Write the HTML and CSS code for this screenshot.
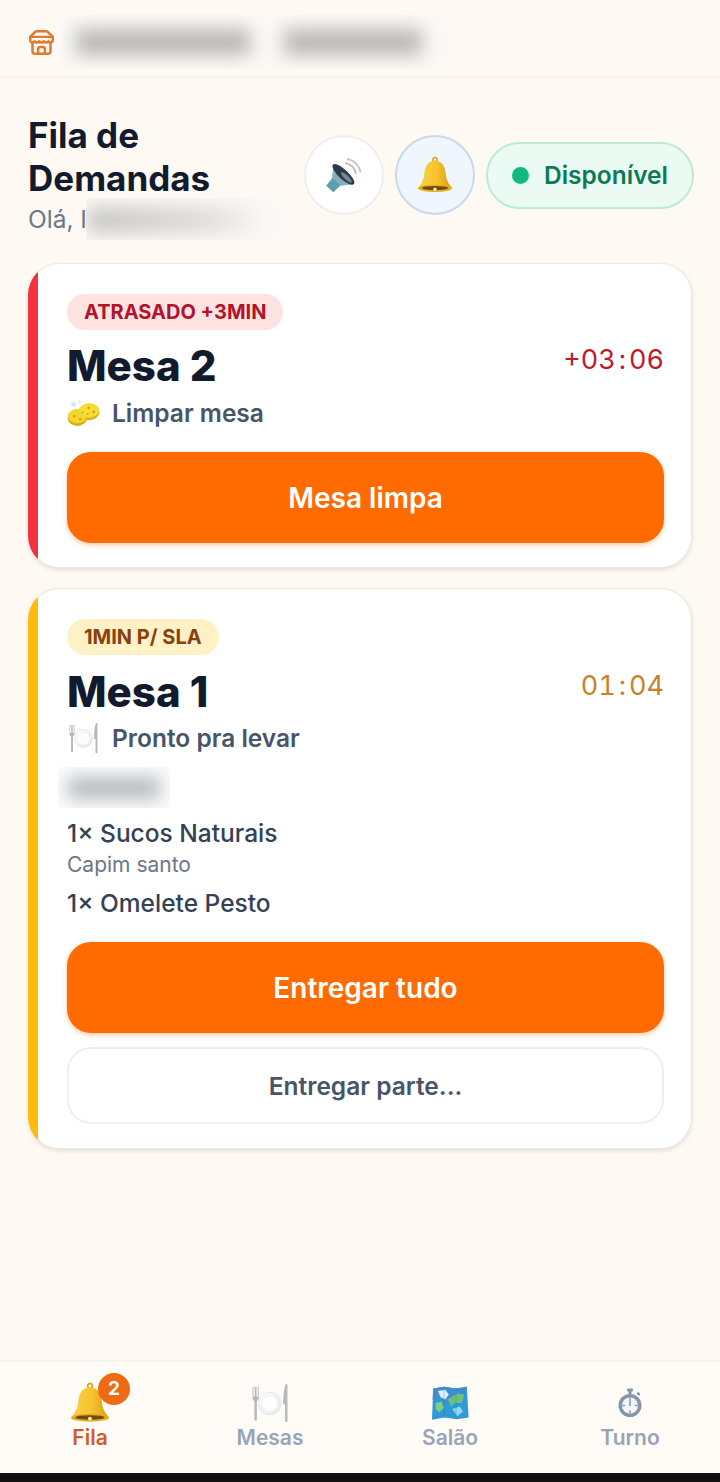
FILE: index.html
```html
<!DOCTYPE html>
<html lang="pt-BR">
<head>
	<meta charset="utf-8">
	<title>Fila de Demandas</title>
	<link rel="stylesheet" href="styles.css">
</head>
<body>
	<!-- icones reaproveitados -->
	<svg class="defs" aria-hidden="true">
		<defs>
			<linearGradient id="ouro" x1="0" y1="0" x2="1" y2="0">
				<stop offset="0" stop-color="#f9d34a"/>
				<stop offset=".55" stop-color="#f6c32c"/>
				<stop offset="1" stop-color="#dd9a12"/>
			</linearGradient>
			<linearGradient id="prato" x1="0" y1="0" x2="1" y2="1">
				<stop offset="0" stop-color="#ffffff"/>
				<stop offset="1" stop-color="#e3e6e9"/>
			</linearGradient>
			<symbol id="ic-sino" viewBox="0 0 64 64">
				<circle cx="32" cy="6" r="3.500" fill="none" stroke="#d9a21c" stroke-width="2.500"/>
				<path d="M32 8C20 8 15 18 14 30C13 41 9 47 3 54L61 54C55 47 51 41 50 30C49 18 44 8 32 8Z" fill="url(#ouro)"/>
				<ellipse cx="32" cy="54.500" rx="29" ry="6" fill="#e8ab1d"/>
				<ellipse cx="32" cy="54" rx="22" ry="3.500" fill="#6d4c12"/>
				<circle cx="32" cy="56" r="3" fill="#ffe9a6"/>
			</symbol>
			<symbol id="ic-prato" viewBox="0 0 64 64">
				<path d="M4 6V24C4 27 6 28 7 29V60H11V29C12 28 14 27 14 24V6H12.500V22H10.500V6H7.500V22H5.500V6Z" fill="#b6babd"/>
				<circle cx="32" cy="33" r="18" fill="url(#prato)" stroke="#e2e5e8" stroke-width="1.500"/>
				<circle cx="32" cy="33" r="12.500" fill="#fcfdfd" stroke="#edeff1"/>
				<path d="M57 2C54 10 53 22 53 34H56V62H60V2Z" fill="#b6babd"/>
			</symbol>
		</defs>
	</svg>

	<div class="app">
		<header class="topo">
			<svg class="topo-loja" viewBox="0 0 24 24" fill="none" stroke="#e07a2c" stroke-width="2.200" stroke-linecap="round" stroke-linejoin="round">
				<path d="m2 7 4.410-4.410A2 2 0 0 1 7.830 2h8.340a2 2 0 0 1 1.420.590L22 7"/>
				<path d="M4 12v8a2 2 0 0 0 2 2h12a2 2 0 0 0 2-2v-8"/>
				<path d="M15 22v-4a2 2 0 0 0-2-2h-2a2 2 0 0 0-2 2v4"/>
				<path d="M2 7h20"/>
				<path d="M22 7v3a2 2 0 0 1-2 2 2.700 2.700 0 0 1-2-1 2.700 2.700 0 0 1-2 1 2.700 2.700 0 0 1-2-1 2.700 2.700 0 0 1-2 1 2.700 2.700 0 0 1-2-1 2.700 2.700 0 0 1-2 1 2.700 2.700 0 0 1-2-1 2.700 2.700 0 0 1-2 1 2 2 0 0 1-2-2V7"/>
			</svg>
			<div class="borrao borrao-topo">
				<span class="borrao-barra barra-loja"></span>
				<span class="borrao-barra barra-cidade"></span>
			</div>
		</header>

		<main class="conteudo">
			<section class="cabecalho">
				<div class="cabecalho-texto">
					<h1 class="titulo">Fila de Demandas</h1>
					<div class="saudacao">
						<span>Olá, I</span>
						<div class="borrao borrao-nome"><span class="borrao-barra barra-nome"></span></div>
					</div>
				</div>
				<div class="acoes">
					<button class="botao-redondo">
						<svg class="icone-acao" viewBox="0 0 64 64">
							<path d="M34 12A20 20 0 0 1 52 30" fill="none" stroke="#b7bcc1" stroke-width="3"/>
							<path d="M37 5A28 28 0 0 1 60 28" fill="none" stroke="#c4c8cc" stroke-width="3"/>
							<path d="M2 50L13 36L27 49L14 61Z" fill="#5d9fb2"/>
							<path d="M14 15L49 47L27 50L12 36Z" fill="#86adba"/>
							<ellipse cx="31" cy="31" rx="24" ry="8" transform="rotate(43 31 31)" fill="#2c3b4c"/>
							<ellipse cx="36" cy="36" rx="12" ry="3.500" transform="rotate(43 36 36)" fill="#6d8b99"/>
						</svg>
					</button>
					<button class="botao-redondo botao-ativo">
						<svg class="icone-acao"><use href="#ic-sino"/></svg>
					</button>
					<div class="disponivel">
						<span class="disponivel-ponto"></span>
						<span>Disponível</span>
					</div>
				</div>
			</section>

			<article class="cartao cartao-atrasado">
				<span class="etiqueta etiqueta-atrasado">ATRASADO +3MIN</span>
				<div class="cartao-linha">
					<h2 class="mesa">Mesa 2</h2>
					<span class="tempo tempo-atrasado">+03<span class="tempo-sep">:</span>06</span>
				</div>
				<div class="estado">
					<svg class="estado-icone" viewBox="0 0 64 52">
						<circle cx="13" cy="9" r="5" fill="#d5e8f4"/>
						<circle cx="24" cy="4" r="3" fill="#e0eef7"/>
						<ellipse cx="20" cy="35" rx="19" ry="16" fill="#d9ad14"/>
						<ellipse cx="43" cy="24" rx="20" ry="16" fill="#d9ad14"/>
						<ellipse cx="20" cy="32" rx="18" ry="14" fill="#f6d62c"/>
						<ellipse cx="43" cy="21" rx="19" ry="14" fill="#f8dc36"/>
						<circle cx="14" cy="32" r="2.500" fill="#cfa210"/>
						<circle cx="26" cy="38" r="2.500" fill="#cfa210"/>
						<circle cx="30" cy="25" r="2" fill="#cfa210"/>
						<circle cx="42" cy="16" r="2.500" fill="#cfa210"/>
						<circle cx="52" cy="24" r="2.500" fill="#cfa210"/>
						<circle cx="40" cy="28" r="2" fill="#cfa210"/>
					</svg>
					<span>Limpar mesa</span>
				</div>
				<button class="botao-principal">Mesa limpa</button>
			</article>

			<article class="cartao cartao-sla">
				<span class="etiqueta etiqueta-sla">1MIN P/ SLA</span>
				<div class="cartao-linha">
					<h2 class="mesa">Mesa 1</h2>
					<span class="tempo tempo-sla">01<span class="tempo-sep">:</span>04</span>
				</div>
				<div class="estado">
					<svg class="estado-icone"><use href="#ic-prato"/></svg>
					<span>Pronto pra levar</span>
				</div>
				<div class="borrao borrao-pedido"><span class="borrao-barra barra-pedido"></span></div>
				<ul class="itens">
					<li class="item">1× Sucos Naturais<small class="item-obs">Capim santo</small></li>
					<li class="item">1× Omelete Pesto</li>
				</ul>
				<button class="botao-principal">Entregar tudo</button>
				<button class="botao-secundario">Entregar parte...</button>
			</article>
		</main>

		<nav class="abas">
			<a class="aba aba-ativa">
				<span class="aba-icone">
					<svg class="aba-sino"><use href="#ic-sino"/></svg>
					<span class="aba-contador">2</span>
				</span>
				Fila
			</a>
			<a class="aba">
				<span class="aba-icone"><svg class="aba-prato"><use href="#ic-prato"/></svg></span>
				Mesas
			</a>
			<a class="aba">
				<span class="aba-icone">
					<svg class="aba-mapa" viewBox="0 0 64 60">
						<path d="M4 6L22 3L42 6L60 3L63 54L44 57L22 54L2 58Z" fill="#2e9bd6"/>
						<path d="M4 6L22 3L42 6L60 3L60 14L42 20L30 30L10 22L3 24Z" fill="#3f8fd0"/>
						<path d="M12 10L24 8L30 16L24 24L16 20Z" fill="#dff0f8"/>
						<path d="M28 24L44 14L56 16L52 30L40 30L34 36Z" fill="#6cc07a"/>
						<path d="M8 30L18 28L22 38L14 46L8 40Z" fill="#7fcb8a"/>
						<path d="M36 40L48 36L54 44L44 52Z" fill="#8fd8ea"/>
						<path d="M22 3V54M42 6V57" stroke="#1d6f9f" stroke-width="1" opacity=".5"/>
					</svg>
				</span>
				Salão
			</a>
			<a class="aba">
				<span class="aba-icone">
					<svg class="aba-relogio" viewBox="0 0 52 60">
						<rect x="20" y="1" width="12" height="6" rx="2" fill="#8595aa"/>
						<rect x="23" y="6" width="6" height="6" fill="#8595aa"/>
						<rect x="40" y="9" width="7" height="5" rx="2" transform="rotate(45 43 11)" fill="#8595aa"/>
						<circle cx="26" cy="35" r="23" fill="#8595aa"/>
						<circle cx="26" cy="35" r="16" fill="#f4f6f8"/>
						<path d="M26 21V35M26 21v3M40 35h-3M26 49v-3M12 35h3" stroke="#8595aa" stroke-width="3" stroke-linecap="round"/>
					</svg>
				</span>
				Turno
			</a>
		</nav>
		<div class="faixa-sistema"></div>
	</div>
</body>
</html>
```

FILE: styles.css
```css
* {
	box-sizing: border-box;
	font-family: Inter, "Noto Sans", "Liberation Sans", sans-serif;
}

html, body {
	margin: 0;
	padding: 0;
}

.defs {
	position: absolute;
	width: 0;
	height: 0;
}

.app {
	display: flex;
	flex-direction: column;
	min-height: 1482px;
	background-color: #fff9f4;
}

/* topo */
.topo {
	display: flex;
	align-items: center;
	gap: 7px;
	height: 78px;
	padding: 8px 0 0 28px;
	border-bottom: 2px solid #f9f3ed;
}

.topo-loja {
	flex: none;
	width: 27px;
	height: 27px;
}

.borrao {
	overflow: hidden;
	background-color: #fbf8f5;
}

.borrao-barra {
	display: block;
	background-color: #b9b8b7;
	filter: blur(9px);
}

.borrao-topo {
	display: flex;
	align-items: center;
	gap: 34px;
	width: 388px;
	height: 54px;
	padding: 0 14px;
}

.barra-loja {
	width: 174px;
	height: 26px;
}

.barra-cidade {
	width: 138px;
	height: 26px;
}

/* cabecalho */
.conteudo {
	display: flex;
	flex: 1;
	flex-direction: column;
	gap: 20px;
	padding: 0 28px;
}

.cabecalho {
	display: flex;
	align-items: center;
	justify-content: space-between;
	gap: 12px;
	margin: 35px 0 6px;
}

.cabecalho-texto {
	flex: 1;
	min-width: 0;
}

.titulo {
	margin: 0;
	padding-top: 1px;
	font-size: 35px;
	font-weight: 700;
	line-height: 43px;
	color: #111b2d;
}

.saudacao {
	display: flex;
	align-items: center;
	height: 37px;
	font-size: 24.500px;
	color: #6b7788;
	white-space: nowrap;
}

.borrao-nome {
	flex: none;
	width: 196px;
	height: 42px;
	margin-left: -1px;
	padding: 9px 0 0 2px;
}

.barra-nome {
	width: 170px;
	height: 26px;
	background: linear-gradient(90deg, #c6c5c4, #dedcdb 70%, #f6f3f0);
}

.acoes {
	display: flex;
	flex: none;
	align-items: center;
	gap: 11px;
	margin-right: -2px;
}

.botao-redondo {
	display: flex;
	align-items: center;
	justify-content: center;
	width: 80px;
	height: 80px;
	padding: 0;
	border: 2px solid #f1eeeb;
	border-radius: 50%;
	background-color: #fff;
}

.botao-ativo {
	border-color: #c9d9ea;
	background-color: #eff6fd;
}

.icone-acao {
	width: 38px;
	height: 38px;
}

.disponivel {
	display: flex;
	align-items: center;
	gap: 15px;
	width: 208px;
	height: 67px;
	padding-left: 24px;
	border: 2px solid #bcebd2;
	border-radius: 34px;
	background-color: #ebfbf3;
	font-size: 24.500px;
	font-weight: 600;
	color: #0d7a55;
}

.disponivel-ponto {
	width: 17px;
	height: 17px;
	border-radius: 50%;
	background-color: #10b97f;
}

/* cartoes */
.cartao {
	padding: 30px 27px 24px 38px;
	border: 1px solid #ebe7e3;
	border-left-color: transparent;
	border-radius: 32px;
	background-origin: border-box;
	box-shadow: 0 2px 4px rgba(60, 50, 40, .14);
}

.cartao-atrasado {
	background-image: linear-gradient(90deg, #f4323f 10px, #fff 10px);
}

.cartao-sla {
	background-image: linear-gradient(90deg, #ffbb0c 10px, #fff 10px);
}

.etiqueta {
	display: inline-block;
	height: 36px;
	padding: 0 17px;
	border-radius: 18px;
	font-size: 20px;
	font-weight: 700;
	line-height: 36px;
}

.etiqueta-atrasado {
	background-color: #fde2e2;
	color: #b3132a;
}

.etiqueta-sla {
	background-color: #fdf1c5;
	color: #8a3f0c;
}

.cartao-linha {
	display: flex;
	align-items: center;
	justify-content: space-between;
	height: 62px;
	margin-top: 4px;
}

.cartao-sla .cartao-linha {
	margin-top: 5px;
}

.mesa {
	margin: 0;
	font-size: 42px;
	font-weight: 800;
	color: #111b2d;
}

.tempo {
	margin-bottom: 12px;
	font-size: 27px;
	font-variant-numeric: tabular-nums;
}

.tempo-sep {
	margin: 0 3px;
}

.tempo-atrasado {
	color: #bd1a2e;
}

.tempo-sla {
	color: #c9812a;
}

.estado {
	display: flex;
	align-items: center;
	gap: 12px;
	height: 32px;
	margin-top: 1px;
	font-size: 24.500px;
	font-weight: 600;
	color: #475569;
}

.cartao-sla .estado {
	margin-top: 0;
}

.estado-icone {
	flex: none;
	width: 33px;
	height: 32px;
}

.borrao-pedido {
	width: 112px;
	height: 41px;
	margin: 13px 0 0 -9px;
	padding: 10px;
	background-color: #fcfcfc;
}

.barra-pedido {
	height: 22px;
	background-color: #b4b9bf;
}

.itens {
	margin: 9px 0 0;
	padding: 0;
	list-style: none;
}

.item {
	margin-bottom: 8px;
	font-size: 24.500px;
	font-weight: 500;
	line-height: 32px;
	color: #334155;
}

.item-obs {
	display: block;
	margin-top: 2px;
	font-size: 21px;
	font-weight: 400;
	line-height: 28px;
	color: #6b7789;
}

.botao-principal {
	display: block;
	width: 100%;
	height: 91px;
	margin-top: 23px;
	border: 0;
	border-radius: 24px;
	background-color: #ff6b00;
	box-shadow: 0 2px 5px rgba(255, 107, 0, .35);
	font-size: 28px;
	font-weight: 600;
	color: #fff;
}

.botao-secundario {
	display: block;
	width: 100%;
	height: 77px;
	margin-top: 14px;
	border: 2px solid #f1efed;
	border-radius: 24px;
	background-color: #fff;
	font-size: 24.500px;
	font-weight: 600;
	color: #475569;
}

/* abas */
.abas {
	display: grid;
	grid-template-columns: repeat(4, 1fr);
	height: 113px;
	padding-top: 20px;
	border-top: 2px solid #f9f4ee;
	background-color: #fffcf8;
}

.aba {
	display: flex;
	flex-direction: column;
	align-items: center;
	gap: 1px;
	font-size: 21px;
	font-weight: 600;
	color: #98a4b6;
}

.aba-ativa {
	color: #cf5d28;
}

.aba-icone {
	position: relative;
	display: flex;
	align-items: center;
	justify-content: center;
	height: 42px;
}

.aba-sino {
	width: 42px;
	height: 42px;
}

.aba-prato {
	width: 42px;
	height: 40px;
}

.aba-mapa {
	width: 40px;
	height: 36px;
}

.aba-relogio {
	width: 26px;
	height: 30px;
}

.aba-contador {
	position: absolute;
	top: -9px;
	right: -19px;
	width: 32px;
	height: 32px;
	border-radius: 50%;
	background-color: #ef6a15;
	font-size: 19px;
	font-weight: 700;
	line-height: 32px;
	text-align: center;
	color: #fff;
}

.faixa-sistema {
	height: 9px;
	background-color: #121010;
}
```
